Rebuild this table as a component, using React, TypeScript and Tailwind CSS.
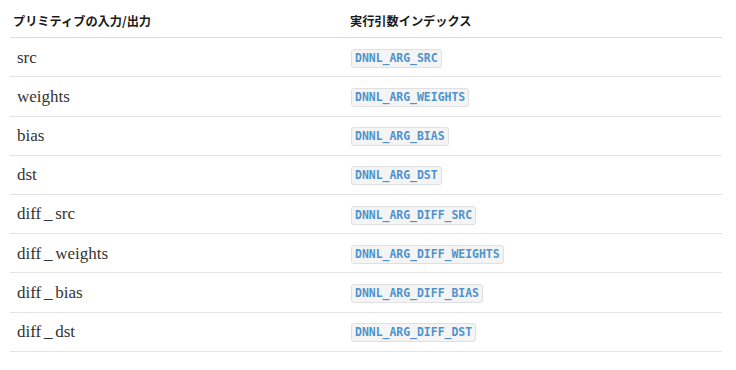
import React from "react";

const rows: { name: string; arg: string }[] = [
  { name: "src", arg: "DNNL_ARG_SRC" },
  { name: "weights", arg: "DNNL_ARG_WEIGHTS" },
  { name: "bias", arg: "DNNL_ARG_BIAS" },
  { name: "dst", arg: "DNNL_ARG_DST" },
  { name: "diff _ src", arg: "DNNL_ARG_DIFF_SRC" },
  { name: "diff _ weights", arg: "DNNL_ARG_DIFF_WEIGHTS" },
  { name: "diff _ bias", arg: "DNNL_ARG_DIFF_BIAS" },
  { name: "diff _ dst", arg: "DNNL_ARG_DIFF_DST" },
];

const jp = { fontFamily: '"Noto Sans CJK JP", "Noto Sans", sans-serif' };
const serif = { fontFamily: '"Liberation Serif", "DejaVu Serif", serif' };
const mono = { fontFamily: '"DejaVu Sans Mono", "Liberation Mono", monospace' };

export default function App() {
  return (
    <div className="w-[736px] h-[370px] bg-white">
      <div className="ml-[10px] w-[712px]">
        <div
          className="grid grid-cols-[338px_1fr] h-[38.3px] items-center border-b border-[#dcdce6] text-[12.2px] font-bold text-[#1a1a1a]"
          style={jp}
        >
          <div className="pl-[3px] pt-[4px]">プリミティブの入力/出力</div>
          <div className="pl-[2px] pt-[4px]">実行引数インデックス</div>
        </div>
        {rows.map((r) => (
          <div
            key={r.arg}
            className="grid grid-cols-[338px_1fr] h-[39.2px] items-center border-b border-[#e3e3e3]"
          >
            <div
              className="pl-[7px] text-[17px] text-[#333] whitespace-pre [word-spacing:-1.5px]"
              style={serif}
            >
              {r.name}
            </div>
            <div className="flex">
              <code
                className="ml-[3px] mt-[2px] px-[3px] h-[19px] flex items-center rounded-[3px] border border-[#e0e0e0] bg-[#f4f4f4] text-[11.45px] font-bold text-[#4e93cd]"
                style={mono}
              >
                {r.arg}
              </code>
            </div>
          </div>
        ))}
      </div>
    </div>
  );
}
